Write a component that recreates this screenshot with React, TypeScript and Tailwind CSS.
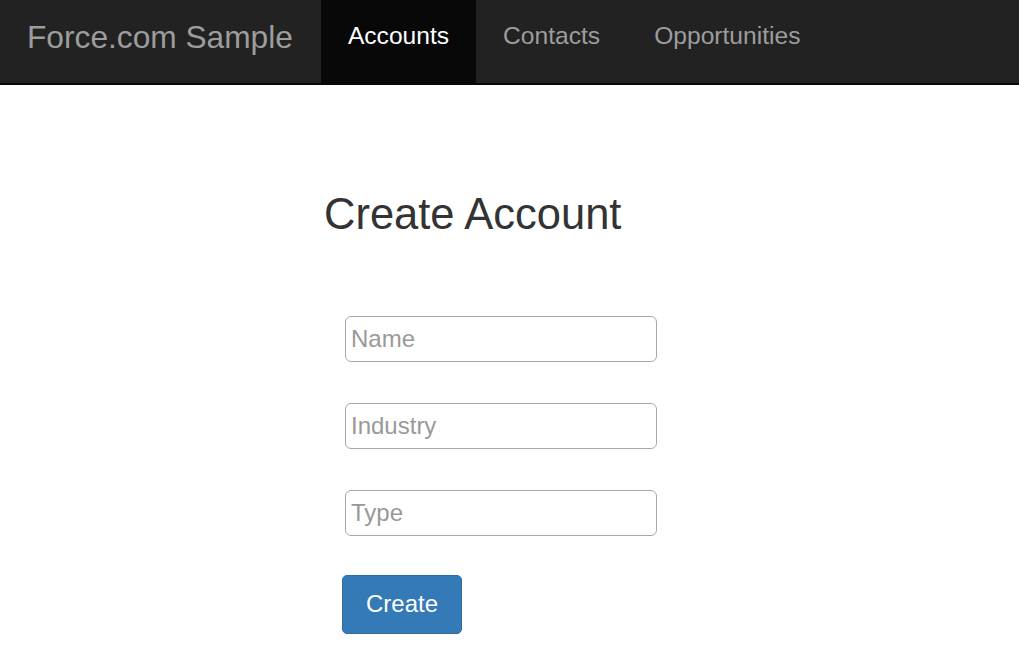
import React from 'react';

const navLinks = [
  { label: 'Accounts', active: true },
  { label: 'Contacts', active: false },
  { label: 'Opportunities', active: false },
];

const fields = ['Name', 'Industry', 'Type'];

export default function App() {
  return (
    <div className="min-h-screen bg-white font-['Liberation_Sans',Arial,sans-serif]">
      {/* Navbar */}
      <nav className="flex h-[85px] items-stretch border-b-2 border-[#080808] bg-[#222222]">
        <a className="flex items-center pb-[7px] pl-[27px] pr-[28px] text-[31.7px] text-[#9d9d9d]">Force.com Sample</a>
        <ul className="flex items-stretch">
          {navLinks.map((link) => (
            <li key={link.label} className={link.active ? 'bg-[#080808]' : ''}>
              <a
                className={`flex h-full items-center px-[27px] pb-[10px] text-[24.6px] ${
                  link.active ? 'text-white' : 'text-[#9d9d9d]'
                }`}
              >
                {link.label}
              </a>
            </li>
          ))}
        </ul>
      </nav>

      {/* Form */}
      <div className="ml-[324px] pt-[106px]">
        <h3 className="text-[43.5px] leading-[1.1] text-[#333333]">Create Account</h3>
        <form className="mt-[77px] flex flex-col items-start pl-[18px]" onSubmit={(e) => e.preventDefault()}>
          {fields.map((f) => (
            <input
              key={f}
              type="text"
              placeholder={f}
              className="mb-[41px] ml-[3px] h-[46px] w-[312px] rounded-[6px] border border-[#a9a9a9] px-[5px] text-[24px] text-[#333] placeholder-[#999999] outline-none"
            />
          ))}
          <button
            type="submit"
            className="-mt-[2px] h-[59px] rounded-[5px] border border-[#2e6da4] bg-[#337ab7] px-[23px] text-[24px] text-white"
          >
            Create
          </button>
        </form>
      </div>
    </div>
  );
}
